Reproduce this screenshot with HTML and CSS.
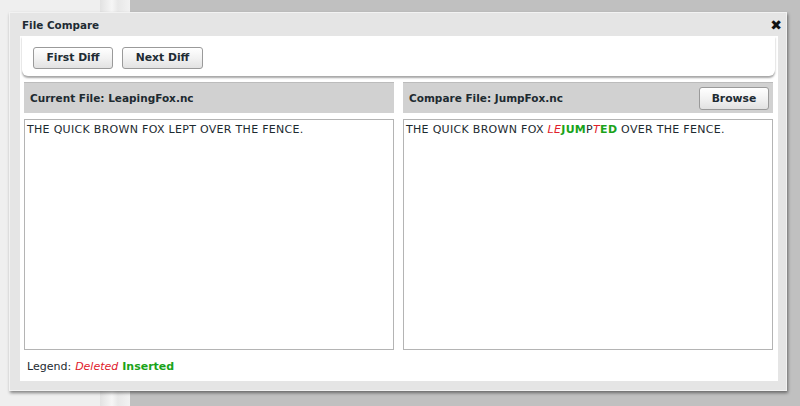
FILE: index.html
```html
<!DOCTYPE html>
<html>
<head>
<meta charset="utf-8">
<link rel="stylesheet" href="styles.css">
</head>
<body>
<div class="backdrop">
  <div class="bg-left"></div>
  <div class="bg-strip"></div>
  <div class="bg-view"></div>
</div>
<div class="dialog">
  <div class="titlebar">
    <span class="title">File Compare</span>
    <span class="close">&#x2716;</span>
  </div>
  <div class="panel">
    <div class="toolbar">
      <button class="btn btn-first">First Diff</button>
      <button class="btn btn-next">Next Diff</button>
    </div>
    <div class="columns">
      <div class="col">
        <div class="colhead"><span class="label">Current File: LeapingFox.nc</span></div>
        <div class="textbox">THE QUICK BROWN FOX LEPT OVER THE FENCE.</div>
      </div>
      <div class="col">
        <div class="colhead"><span class="label">Compare File: JumpFox.nc</span><button class="btn btn-browse">Browse</button></div>
        <div class="textbox">THE QUICK BROWN FOX <span class="del">LE</span><span class="ins">JUM</span>P<span class="del">T</span><span class="ins">ED</span> OVER THE FENCE.</div>
      </div>
    </div>
    <div class="legend">Legend: <span class="del">Deleted</span> <span class="ins">Inserted</span></div>
  </div>
</div>
</body>
</html>
```
FILE: styles.css
```css
html, body {
  margin: 0;
  padding: 0;
  width: 800px;
  height: 406px;
  overflow: hidden;
  font-family: "DejaVu Sans", Verdana, sans-serif;
  font-size: 11px;
  color: #1d2a30;
}
.backdrop {
  display: flex;
  width: 800px;
  height: 406px;
}
.bg-left {
  width: 100px;
  background: #efefef;
}
.bg-strip {
  width: 30px;
  background: linear-gradient(to right, #e2e2e2, #f6f6f6 40%, #e8e8e8 60%, #f2f2f2);
}
.bg-view {
  flex: 1;
  background: #c0c0c0;
}
.dialog {
  position: absolute;
  left: 9px;
  top: 12px;
  width: 778px;
  height: 379px;
  background: #e5e5e5;
  border: 1px solid #f2f2f2;
  box-shadow: 1px 2px 3px rgba(0,0,0,0.45);
  display: flex;
  flex-direction: column;
  box-sizing: border-box;
  padding: 0 8px 9px 10px;
}
.titlebar {
  height: 22px;
  display: flex;
  align-items: center;
  justify-content: space-between;
  padding: 1px 0 0 2px;
}
.title {
  font-weight: bold;
  font-size: 10.4px;
  color: #1e2b33;
}
.close {
  font-size: 14px;
  font-weight: bold;
  color: #111;
  line-height: 1;
  margin-right: -4px;
}
.panel {
  flex: 1;
  background: #ffffff;
  display: flex;
  flex-direction: column;
  padding: 0 5px 0 4px;
}
.toolbar {
  height: 40px;
  box-sizing: border-box;
  display: flex;
  align-items: center;
  gap: 9px;
  padding: 3px 0 0 11px;
  margin: 0 -2px 0 -2px;
  background: #fff;
  border-radius: 0 0 6px 6px;
  box-shadow: 0 2px 2px rgba(0,0,0,0.35);
}
.btn {
  font-family: "DejaVu Sans", Verdana, sans-serif;
  font-weight: bold;
  font-size: 10.8px;
  color: #1e2b33;
  height: 22px;
  border: 1px solid #9a9a9a;
  border-radius: 3px;
  background: linear-gradient(#ffffff, #f2f2f2 50%, #e2e2e2);
  box-shadow: inset 0 1px 0 #fff;
  padding: 0;
}
.btn-first { width: 80px; }
.btn-next { width: 81px; }
.btn-browse { width: 70px; height: 23px; }
.columns {
  display: flex;
  gap: 9px;
  margin-top: 6px;
  flex: 1;
}
.col {
  flex: 1;
  display: flex;
  flex-direction: column;
}
.colhead {
  height: 30px;
  background: #d1d1d1;
  display: flex;
  align-items: center;
  justify-content: space-between;
  padding: 0 4px 0 6px;
  border-top: 1px solid #bcbcbc;
}
.label {
  font-weight: bold;
  font-size: 10.5px;
}
.textbox {
  margin-top: 6px;
  height: 231px;
  box-sizing: border-box;
  border: 1px solid #b4b4b4;
  padding: 3px 2px;
  font-size: 11px;
  letter-spacing: 0.3px;
  color: #1d2a30;
}
.del {
  color: #e0202a;
  font-style: italic;
}
.ins {
  color: #1aa31a;
  font-weight: bold;
}
.legend {
  height: 30px;
  display: flex;
  align-items: center;
  gap: 4px;
  padding-left: 3px;
  font-size: 11px;
}
```
